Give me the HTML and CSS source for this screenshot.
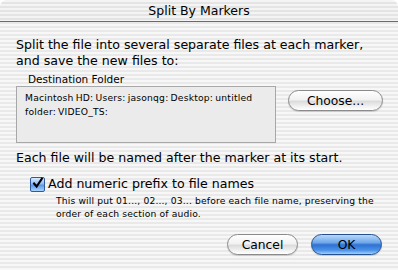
FILE: index.html
```html
<!DOCTYPE html>
<html lang="en">
<head>
    <title>Split By Markers</title>
    <link rel="stylesheet" href="styles.css">
</head>
<body>
    <div class="window">
        <!-- Title Bar -->
        <div class="titlebar">Split By Markers</div>

        <div class="content">
            <p class="intro">Split the file into several separate files at each marker,<br>and save the new files to:</p>

            <!-- Destination -->
            <div class="dest-label">Destination Folder</div>
            <div class="dest-row">
                <div class="dest-box">Macintosh HD: Users: jasonqg: Desktop: untitled folder: VIDEO_TS:</div>
                <button class="aqua-btn choose">Choose...</button>
            </div>

            <p class="naming">Each file will be named after the marker at its start.</p>

            <label class="check-row">
                <span class="checkbox">
                    <svg width="15" height="15" viewBox="0 0 15 15">
                        <path d="M3.5 7.5 L6.5 11 L12.5 2" fill="none" stroke="#000" stroke-width="2.4" stroke-linecap="square"/>
                    </svg>
                </span>
                <span>Add numeric prefix to file names</span>
            </label>
            <p class="hint">This will put 01..., 02..., 03... before each file name, preserving the<br>order of each section of audio.</p>

            <!-- Buttons -->
            <div class="actions">
                <button class="aqua-btn">Cancel</button>
                <button class="aqua-btn default">OK</button>
            </div>
        </div>
    </div>
</body>
</html>
```

FILE: styles.css
```css
* {
    margin: 0;
    padding: 0;
    box-sizing: border-box;
}

body {
    font-family: "DejaVu Sans", sans-serif;
    color: #000;
    background: #fff;
}

.window {
    width: 398px;
    height: 270px;
    border-radius: 7px 7px 0 0;
    overflow: hidden;
    background: repeating-linear-gradient(to bottom, #f7f7f7 0, #f7f7f7 2px, #e9e9e9 2px, #e9e9e9 4px);
}

/* Title Bar */
.titlebar {
    height: 22px;
    border-bottom: 1px solid #6a6a6a;
    text-align: center;
    font-size: 12.5px;
    line-height: 21px;
    background: repeating-linear-gradient(to bottom, #f4f4f4 0, #f4f4f4 2px, #e4e4e4 2px, #e4e4e4 4px);
}

.content {
    padding: 15px 15px 0 16px;
}

.intro {
    font-size: 12.6px;
    line-height: 16px;
    white-space: nowrap;
}

.dest-label {
    margin: 4px 0 0 12px;
    font-size: 10.5px;
    line-height: 13px;
}

.dest-row {
    display: flex;
    align-items: flex-start;
}

.dest-box {
    width: 260px;
    height: 57px;
    background: #ebebeb;
    border: 1px solid #a8a8a8;
    padding: 4px 8px;
    font-size: 9.2px;
    line-height: 14px;
    letter-spacing: 0.2px;
    word-spacing: -1px;
}

/* Aqua buttons */
.aqua-btn {
    font-family: "DejaVu Sans", sans-serif;
    font-size: 12.3px;
    height: 21px;
    border-radius: 11px;
    border: 1px solid #8a8a8a;
    color: #000;
    background: linear-gradient(to bottom, #ffffff 0%, #f2f2f2 45%, #dcdcdc 55%, #f4f4f4 85%, #ffffff 100%);
    box-shadow: 0 1px 1px rgba(0, 0, 0, 0.15);
}

.choose {
    width: 95px;
    margin: 4px 0 0 12px;
}

.naming {
    margin-top: 7px;
    font-size: 12.6px;
    line-height: 16px;
}

.check-row {
    display: flex;
    align-items: center;
    gap: 3px;
    margin: 10px 0 0 14px;
    font-size: 12.6px;
    line-height: 16px;
}

.checkbox {
    width: 15px;
    height: 15px;
    border-radius: 2px;
    border: 1px solid #2f5a9c;
    background: linear-gradient(to bottom, #d6e9ff 0%, #8fbdf5 45%, #5c96e6 55%, #a8d4ff 100%);
    display: flex;
}

.checkbox svg {
    margin: -2px 0 0 0;
}

.hint {
    margin: 2px 0 0 40px;
    font-size: 9.2px;
    line-height: 13px;
    letter-spacing: 0.15px;
    white-space: nowrap;
}

.actions {
    display: flex;
    justify-content: flex-end;
    gap: 13px;
    margin-top: 14px;
    padding-right: 1px;
}

.actions .aqua-btn {
    width: 71px;
}

.aqua-btn.default {
    border-color: #25518f;
    background: linear-gradient(to bottom, #b9d8fb 0%, #6ea7ea 40%, #2f72d3 52%, #4b91e8 80%, #9ed0ff 100%);
}
```
